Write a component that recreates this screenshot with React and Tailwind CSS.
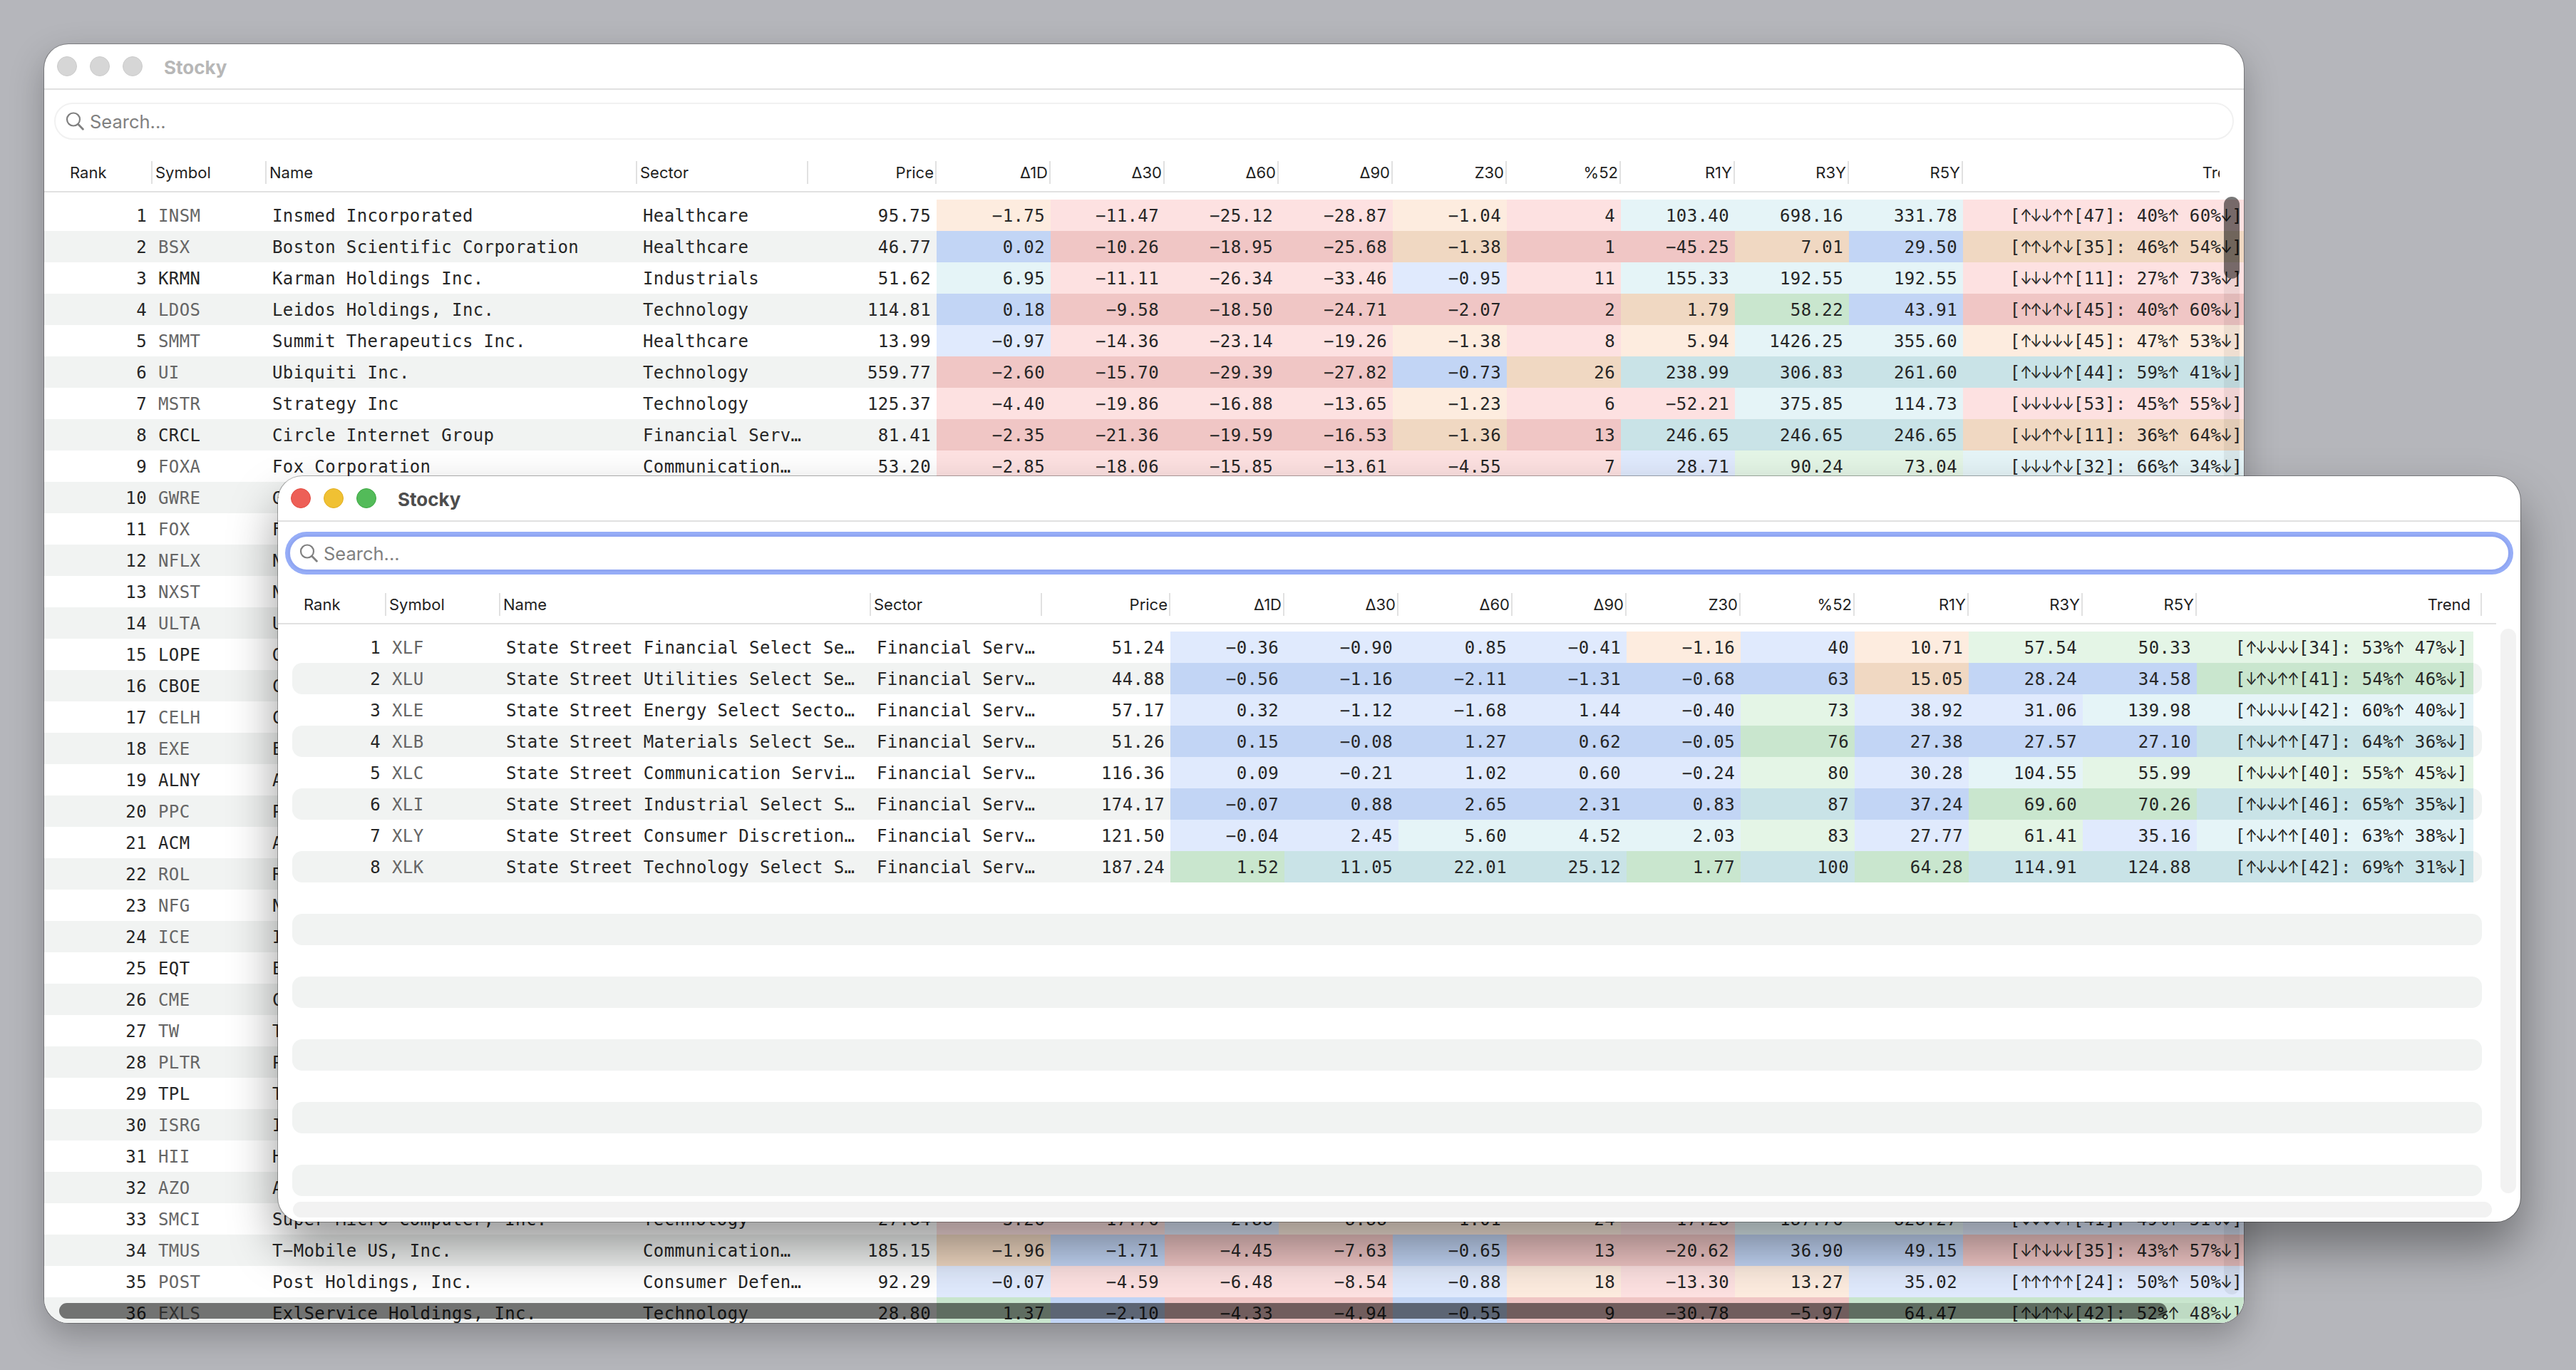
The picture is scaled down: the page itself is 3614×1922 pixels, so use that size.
import React from "react";

const COLUMNS = ["Price", "Δ1D", "Δ30", "Δ60", "Δ90", "Z30", "%52", "R1Y", "R3Y", "R5Y"];

// Cell tints: r = red, o = orange, b = blue, g = green, t = teal
const LIGHT = {
  r: "bg-[#fde1e1]",
  o: "bg-[#fdecdf]",
  b: "bg-[#e0eafd]",
  g: "bg-[#e4f5e6]",
  t: "bg-[#e5f4f7]",
};

const DARK = {
  r: "bg-[#f0c6c5]",
  o: "bg-[#f0d8c2]",
  b: "bg-[#c2d5f5]",
  g: "bg-[#c9e6ce]",
  t: "bg-[#c9e3e7]",
};

// rank, symbol, name, sector, price + metrics, trend, tints
const STOCKS = [
  [1, "INSM", "Insmed Incorporated", "Healthcare", "95.75 −1.75 −11.47 −25.12 −28.87 −1.04 4 103.40 698.16 331.78", "[↑↓↓↑↑[47]: 40%↑ 60%↓]", "orrrortttr"],
  [2, "BSX", "Boston Scientific Corporation", "Healthcare", "46.77 0.02 −10.26 −18.95 −25.68 −1.38 1 −45.25 7.01 29.50", "[↑↑↓↑↓[35]: 46%↑ 54%↓]", "brrrorrobo"],
  [3, "KRMN", "Karman Holdings Inc.", "Industrials", "51.62 6.95 −11.11 −26.34 −33.46 −0.95 11 155.33 192.55 192.55", "[↓↓↓↑↑[11]: 27%↑ 73%↓]", "trrrbrtttr"],
  [4, "LDOS", "Leidos Holdings, Inc.", "Technology", "114.81 0.18 −9.58 −18.50 −24.71 −2.07 2 1.79 58.22 43.91", "[↑↑↓↑↓[45]: 40%↑ 60%↓]", "brrrrrogbr"],
  [5, "SMMT", "Summit Therapeutics Inc.", "Healthcare", "13.99 −0.97 −14.36 −23.14 −19.26 −1.38 8 5.94 1426.25 355.60", "[↑↓↓↓↓[45]: 47%↑ 53%↓]", "brrrorotto"],
  [6, "UI", "Ubiquiti Inc.", "Technology", "559.77 −2.60 −15.70 −29.39 −27.82 −0.73 26 238.99 306.83 261.60", "[↑↓↓↓↑[44]: 59%↑ 41%↓]", "rrrrbotttt"],
  [7, "MSTR", "Strategy Inc", "Technology", "125.37 −4.40 −19.86 −16.88 −13.65 −1.23 6 −52.21 375.85 114.73", "[↓↓↓↓↓[53]: 45%↑ 55%↓]", "rrrrorrttr"],
  [8, "CRCL", "Circle Internet Group", "Financial Serv…", "81.41 −2.35 −21.36 −19.59 −16.53 −1.36 13 246.65 246.65 246.65", "[↓↓↑↑↓[11]: 36%↑ 64%↓]", "rrrrorttto"],
  [9, "FOXA", "Fox Corporation", "Communication…", "53.20 −2.85 −18.06 −15.85 −13.61 −4.55 7 28.71 90.24 73.04", "[↓↓↓↑↓[32]: 66%↑ 34%↓]", "rrrrrrbggt"],
  [10, "GWRE", "Guidewire Software, Inc."],
  [11, "FOX", "Fox Corporation"],
  [12, "NFLX", "Netflix, Inc."],
  [13, "NXST", "Nexstar Media Group, Inc."],
  [14, "ULTA", "Ulta Beauty, Inc."],
  [15, "LOPE", "Grand Canyon Education, Inc."],
  [16, "CBOE", "Cboe Global Markets, Inc."],
  [17, "CELH", "Celsius Holdings, Inc."],
  [18, "EXE", "Expand Energy Corporation"],
  [19, "ALNY", "Alnylam Pharmaceuticals, Inc."],
  [20, "PPC", "Pilgrim's Pride Corporation"],
  [21, "ACM", "AECOM"],
  [22, "ROL", "Rollins, Inc."],
  [23, "NFG", "National Fuel Gas Company"],
  [24, "ICE", "Intercontinental Exchange"],
  [25, "EQT", "EQT Corporation"],
  [26, "CME", "CME Group Inc."],
  [27, "TW", "Tradeweb Markets Inc."],
  [28, "PLTR", "Palantir Technologies Inc."],
  [29, "TPL", "Texas Pacific Land"],
  [30, "ISRG", "Intuitive Surgical, Inc."],
  [31, "HII", "Huntington Ingalls"],
  [32, "AZO", "AutoZone, Inc."],
  [33, "SMCI", "Super Micro Computer, Inc.", "Technology", "27.84 −3.26 −17.76 −2.88 −8.88 −1.01 24 −17.28 187.76 828.27", "[↓↓↓↓↑[41]: 49%↑ 51%↓]", "rrbooorttb"],
  [34, "TMUS", "T−Mobile US, Inc.", "Communication…", "185.15 −1.96 −1.71 −4.45 −7.63 −0.65 13 −20.62 36.90 49.15", "[↓↑↓↓↓[35]: 43%↑ 57%↓]", "obrrbrrbbr"],
  [35, "POST", "Post Holdings, Inc.", "Consumer Defen…", "92.29 −0.07 −4.59 −6.48 −8.54 −0.88 18 −13.30 13.27 35.02", "[↑↑↑↑↑[24]: 50%↑ 50%↓]", "brrrborobb"],
  [36, "EXLS", "ExlService Holdings, Inc.", "Technology", "28.80 1.37 −2.10 −4.33 −4.94 −0.55 9 −30.78 −5.97 64.47", "[↑↓↑↑↓[42]: 52%↑ 48%↓]", "gbrrbrrrgg"],
];

const SECTORS = [
  [1, "XLF", "State Street Financial Select Se…", "Financial Serv…", "51.24 −0.36 −0.90 0.85 −0.41 −1.16 40 10.71 57.54 50.33", "[↑↓↓↓↓[34]: 53%↑ 47%↓]", "bbbboboggg"],
  [2, "XLU", "State Street Utilities Select Se…", "Financial Serv…", "44.88 −0.56 −1.16 −2.11 −1.31 −0.68 63 15.05 28.24 34.58", "[↓↑↓↑↑[41]: 54%↑ 46%↓]", "bbbbbbobbg"],
  [3, "XLE", "State Street Energy Select Secto…", "Financial Serv…", "57.17 0.32 −1.12 −1.68 1.44 −0.40 73 38.92 31.06 139.98", "[↑↓↓↓↓[42]: 60%↑ 40%↓]", "bbbbbgbbtt"],
  [4, "XLB", "State Street Materials Select Se…", "Financial Serv…", "51.26 0.15 −0.08 1.27 0.62 −0.05 76 27.38 27.57 27.10", "[↑↓↓↑↑[47]: 64%↑ 36%↓]", "bbbbbgbbbt"],
  [5, "XLC", "State Street Communication Servi…", "Financial Serv…", "116.36 0.09 −0.21 1.02 0.60 −0.24 80 30.28 104.55 55.99", "[↑↓↓↓↑[40]: 55%↑ 45%↓]", "bbbbbgbtgg"],
  [6, "XLI", "State Street Industrial Select S…", "Financial Serv…", "174.17 −0.07 0.88 2.65 2.31 0.83 87 37.24 69.60 70.26", "[↑↓↓↓↑[46]: 65%↑ 35%↓]", "bbbbbtbggt"],
  [7, "XLY", "State Street Consumer Discretion…", "Financial Serv…", "121.50 −0.04 2.45 5.60 4.52 2.03 83 27.77 61.41 35.16", "[↑↓↓↑↑[40]: 63%↑ 38%↓]", "bbtttgbgbt"],
  [8, "XLK", "State Street Technology Select S…", "Financial Serv…", "187.24 1.52 11.05 22.01 25.12 1.77 100 64.28 114.91 124.88", "[↑↓↓↓↑[42]: 69%↑ 31%↓]", "gtttgtgttt"],
];

const EMPTY_ROWS = [9, 10, 11, 12, 13, 14, 15, 16, 17, 18];

// Symbols drawn in the primary text colour
const STRONG = ["KRMN", "CRCL", "LOPE", "CBOE", "ALNY", "ACM", "EQT", "TPL"];

function TitleBar({ active }) {
  return (
    <div className="flex h-16 shrink-0 items-center border-b-2 border-[#e1e1e1] pl-[18px]">
      <div className="flex gap-[18px]">
        <span className={`size-7 rounded-full border ${active ? "border-[#e24b41] bg-[#ed5f57]" : "border-[#cbcbcb] bg-[#d6d6d6]"}`} />
        <span className={`size-7 rounded-full border ${active ? "border-[#e1ae22] bg-[#f0c133]" : "border-[#cbcbcb] bg-[#d6d6d6]"}`} />
        <span className={`size-7 rounded-full border ${active ? "border-[#3fa845] bg-[#53bb59]" : "border-[#cbcbcb] bg-[#d6d6d6]"}`} />
      </div>
      <h1 className={`ml-[30px] pt-[3px] text-[26px] leading-8 font-bold ${active ? "text-[#4d4d4d]" : "text-[#b7b7b7]"}`}>Stocky</h1>
    </div>
  );
}

function SearchField({ active }) {
  return (
    <div
      className={`mx-[14px] mt-[18px] flex h-[52px] shrink-0 items-center rounded-full bg-white text-[#808080] ${
        active
          ? "border-3 border-[#90a6f2] pl-[13px] shadow-[0_0_0_4px_#96adf7]"
          : "border-2 border-[#f1f1f1] pl-[14px]"
      }`}
    >
      <svg className="size-[26px]" viewBox="0 0 26 26" fill="none" stroke="currentColor" strokeWidth="2.2" strokeLinecap="round">
        <circle cx="11" cy="10.5" r="9" />
        <path d="M17.6 17.2 24.4 24.2" strokeWidth="2.8" />
      </svg>
      <span className="ml-[8px] pt-[2px] text-[25.5px] leading-8">Search...</span>
    </div>
  );
}

function HeaderCell({ className, children }) {
  return (
    <div className={`flex h-8 shrink-0 items-center border-r-2 border-[#e1e1e1] ${className}`}>
      {children}
    </div>
  );
}

function TableHeader({ active }) {
  return (
    <div className="mt-[24px] mr-[34px] flex h-[50px] shrink-0 items-start overflow-hidden border-b-2 border-[#e1e1e1] pt-[6px] text-[22px] text-[#1f1f1f]">
      <HeaderCell className="w-[152px] pl-9">Rank</HeaderCell>
      <HeaderCell className="w-[160px] pl-1">Symbol</HeaderCell>
      <HeaderCell className="w-[520px] pl-1">Name</HeaderCell>
      <HeaderCell className="w-[240px] pl-1">Sector</HeaderCell>
      {COLUMNS.map((label) => (
        <HeaderCell key={label} className={`justify-end pr-[2px] ${label === "Price" ? "w-[180px]" : "w-[160px]"}`}>
          {label}
        </HeaderCell>
      ))}
      <HeaderCell className={`justify-end pr-[14px] ${active ? "w-[400px]" : "w-[412px]"}`}>Trend</HeaderCell>
    </div>
  );
}

// Arrows come from the UI font, held to one monospace cell each
function Trend({ text }) {
  return text.split(/([↑↓])/).map((part, i) =>
    part === "↑" || part === "↓" ? (
      <span key={i} className="inline-flex w-[14.83px] scale-x-85 justify-center font-[Inter] tracking-normal">
        {part}
      </span>
    ) : (
      part
    )
  );
}

function Row({ row, active }) {
  const [rank, symbol, name, sector, numbers, trend, tints] = row;
  const even = rank % 2 === 0;
  const tint = even ? DARK : LIGHT;
  const values = numbers ? numbers.split(" ") : [];

  return (
    <div
      className={`flex h-11 shrink-0 items-stretch leading-[46px] whitespace-pre ${even ? "bg-[#f1f3f2]" : ""} ${
        active ? "mr-[54px] ml-5 rounded-[14px]" : ""
      }`}
    >
      <div className={`shrink-0 pr-2 text-right ${active ? "w-[132px]" : "w-[152px]"}`}>{rank}</div>
      <div className={`w-[160px] shrink-0 pl-2 ${STRONG.includes(symbol) ? "" : "text-[#666]"}`}>{symbol}</div>
      <div className="w-[520px] shrink-0 pl-2">{name}</div>
      <div className="w-[240px] shrink-0 pl-2">{sector}</div>
      {values.map((value, i) => (
        <div
          key={i}
          className={`shrink-0 pr-2 text-right ${i === 0 ? "w-[180px]" : "w-[160px]"} ${i === 0 ? "" : tint[tints[i - 1]]}`}
        >
          {value}
        </div>
      ))}
      {trend && (
        <div className={`shrink-0 pr-2 text-right ${active ? "w-[388px]" : "w-[400px]"} ${tint[tints[9]]}`}>
          <Trend text={trend} />
        </div>
      )}
    </div>
  );
}

function Window({ active, rows, className, children }) {
  return (
    <section className={`absolute flex flex-col rounded-[34px] bg-white ${className}`}>
      <div className="flex h-full flex-col overflow-hidden rounded-[34px]">
        <TitleBar active={active} />
        <SearchField active={active} />
        <TableHeader active={active} />
        <div className="mt-[10px] flex flex-col font-['DejaVu_Sans_Mono','Liberation_Mono',monospace] text-[24px] tracking-[0.38px] text-[#262626]">
          {rows.map((row) => (
            <Row key={row[0]} row={row} active={active} />
          ))}
          {active &&
            EMPTY_ROWS.map((n) => (
              <div key={n} className={`mr-[54px] ml-5 h-11 shrink-0 rounded-[14px] ${n % 2 === 0 ? "bg-[#f1f3f2]" : ""}`} />
            ))}
        </div>
        {children}
      </div>
    </section>
  );
}

export default function App() {
  return (
    <main className="relative h-[1922px] w-[3614px] overflow-hidden bg-[#b5b6bb] font-[Inter,'Liberation_Sans',sans-serif]">
      <Window
        rows={STOCKS}
        className="top-[62px] left-[62px] h-[1794px] w-[3086px] shadow-[0_0_0_1px_rgba(0,0,0,0.28),0_18px_48px_rgba(0,0,0,0.26)]"
      >
        {/* Overlay scrollbars */}
        <div className="absolute top-[214px] right-[6px] h-[1540px] w-[22px] rounded-full bg-black/6" />
        <div className="absolute top-[214px] right-[6px] h-[115px] w-[22px] rounded-full bg-black/50" />
        <div className="absolute bottom-[6px] left-[21px] h-[22px] w-[3026px] rounded-full bg-black/5" />
        <div className="absolute bottom-[6px] left-[21px] h-[22px] w-[2957px] rounded-full bg-black/50" />
      </Window>

      <Window
        active
        rows={SECTORS}
        className="top-[668px] left-[390px] h-[1046px] w-[3146px] shadow-[0_0_0_1px_rgba(0,0,0,0.3),0_36px_68px_rgba(0,0,0,0.4)]"
      >
        <div className="absolute top-[214px] right-[6px] h-[792px] w-[22px] rounded-full bg-[#f2f2f2]" />
        <div className="absolute bottom-[6px] left-[21px] h-[22px] w-[3085px] rounded-full bg-[#f2f2f2]" />
      </Window>
    </main>
  );
}
